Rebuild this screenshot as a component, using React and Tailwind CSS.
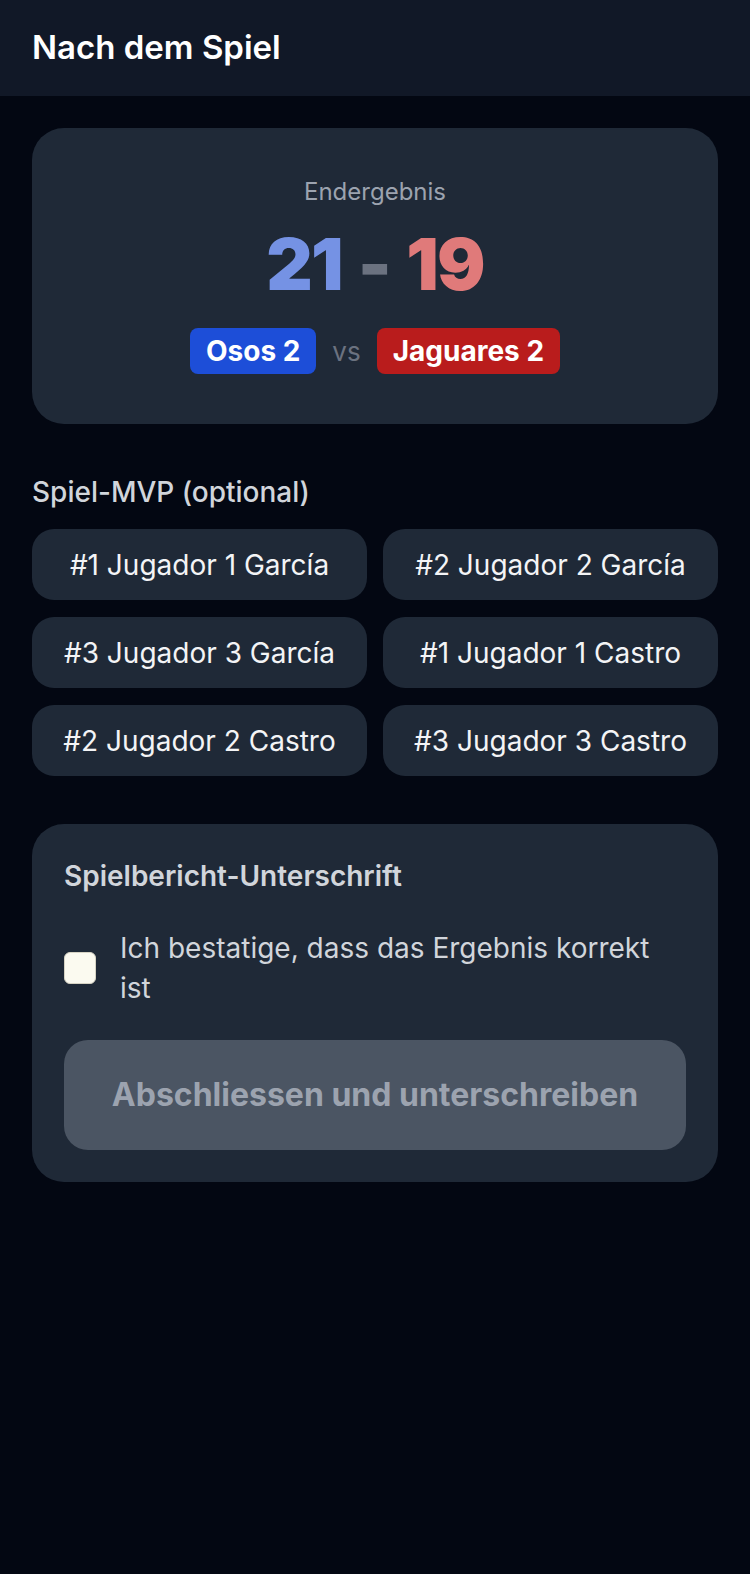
const players = [
  "#1 Jugador 1 García",
  "#2 Jugador 2 García",
  "#3 Jugador 3 García",
  "#1 Jugador 1 Castro",
  "#2 Jugador 2 Castro",
  "#3 Jugador 3 Castro",
];

const App = () => {
  return (
    <div className="min-h-[1574px] bg-[#030712] font-['Inter',sans-serif]">
      <header className="h-24 bg-[#111827] px-8 flex items-center">
        <h1 className="text-[33px] font-semibold text-white">Nach dem Spiel</h1>
      </header>

      <main className="px-8 pt-8">
        {/* final score */}
        <div className="rounded-[32px] bg-[#1f2937] pt-12 pb-[50px] flex flex-col items-center">
          <p className="text-[24px] leading-8 text-[#9ca3af]">Endergebnis</p>
          <div className="mt-5 flex items-center gap-4 text-[72px] leading-none font-black tracking-tight">
            <span className="text-[#7592e4]">21</span>
            <span className="text-[#6b7280]">-</span>
            <span className="text-[#e07a7a]">19</span>
          </div>
          <div className="mt-7 flex items-center gap-4">
            <span className="h-[46px] px-4 rounded-lg bg-[#1d4ed8] text-white text-[28px] font-bold flex items-center">
              Osos 2
            </span>
            <span className="text-[26px] text-[#6b7280]">vs</span>
            <span className="h-[46px] px-4 rounded-lg bg-[#b91c1c] text-white text-[28px] font-bold flex items-center">
              Jaguares 2
            </span>
          </div>
        </div>

        {/* mvp */}
        <h2 className="mt-[52px] text-[28px] leading-8 font-medium text-[#d1d5db]">Spiel-MVP (optional)</h2>
        <div className="mt-[21px] grid grid-cols-2 gap-x-4 gap-y-[17px]">
          {players.map((p) => (
            <button
              key={p}
              className="h-[71px] rounded-[22px] bg-[#1f2937] text-[28px] text-[#f3f4f6] flex items-center justify-center"
            >
              {p}
            </button>
          ))}
        </div>

        {/* signature */}
        <div className="mt-12 rounded-[32px] bg-[#1f2937] p-8 flex flex-col gap-8">
          <h3 className="text-[28px] leading-10 font-semibold text-[#d1d5db]">Spielbericht-Unterschrift</h3>
          <label className="flex items-center gap-6">
            <span className="w-8 h-8 shrink-0 rounded-md bg-[#fbfaf0] border border-[#d6d3c4]"></span>
            <span className="text-[28px] leading-10 text-[#d1d5db]">
              Ich bestatige, dass das Ergebnis korrekt ist
            </span>
          </label>
          <button className="h-[110px] rounded-3xl bg-[#4b5563] text-[32px] font-bold text-[#9ca3af]">
            Abschliessen und unterschreiben
          </button>
        </div>
      </main>
    </div>
  );
};

export default App;
